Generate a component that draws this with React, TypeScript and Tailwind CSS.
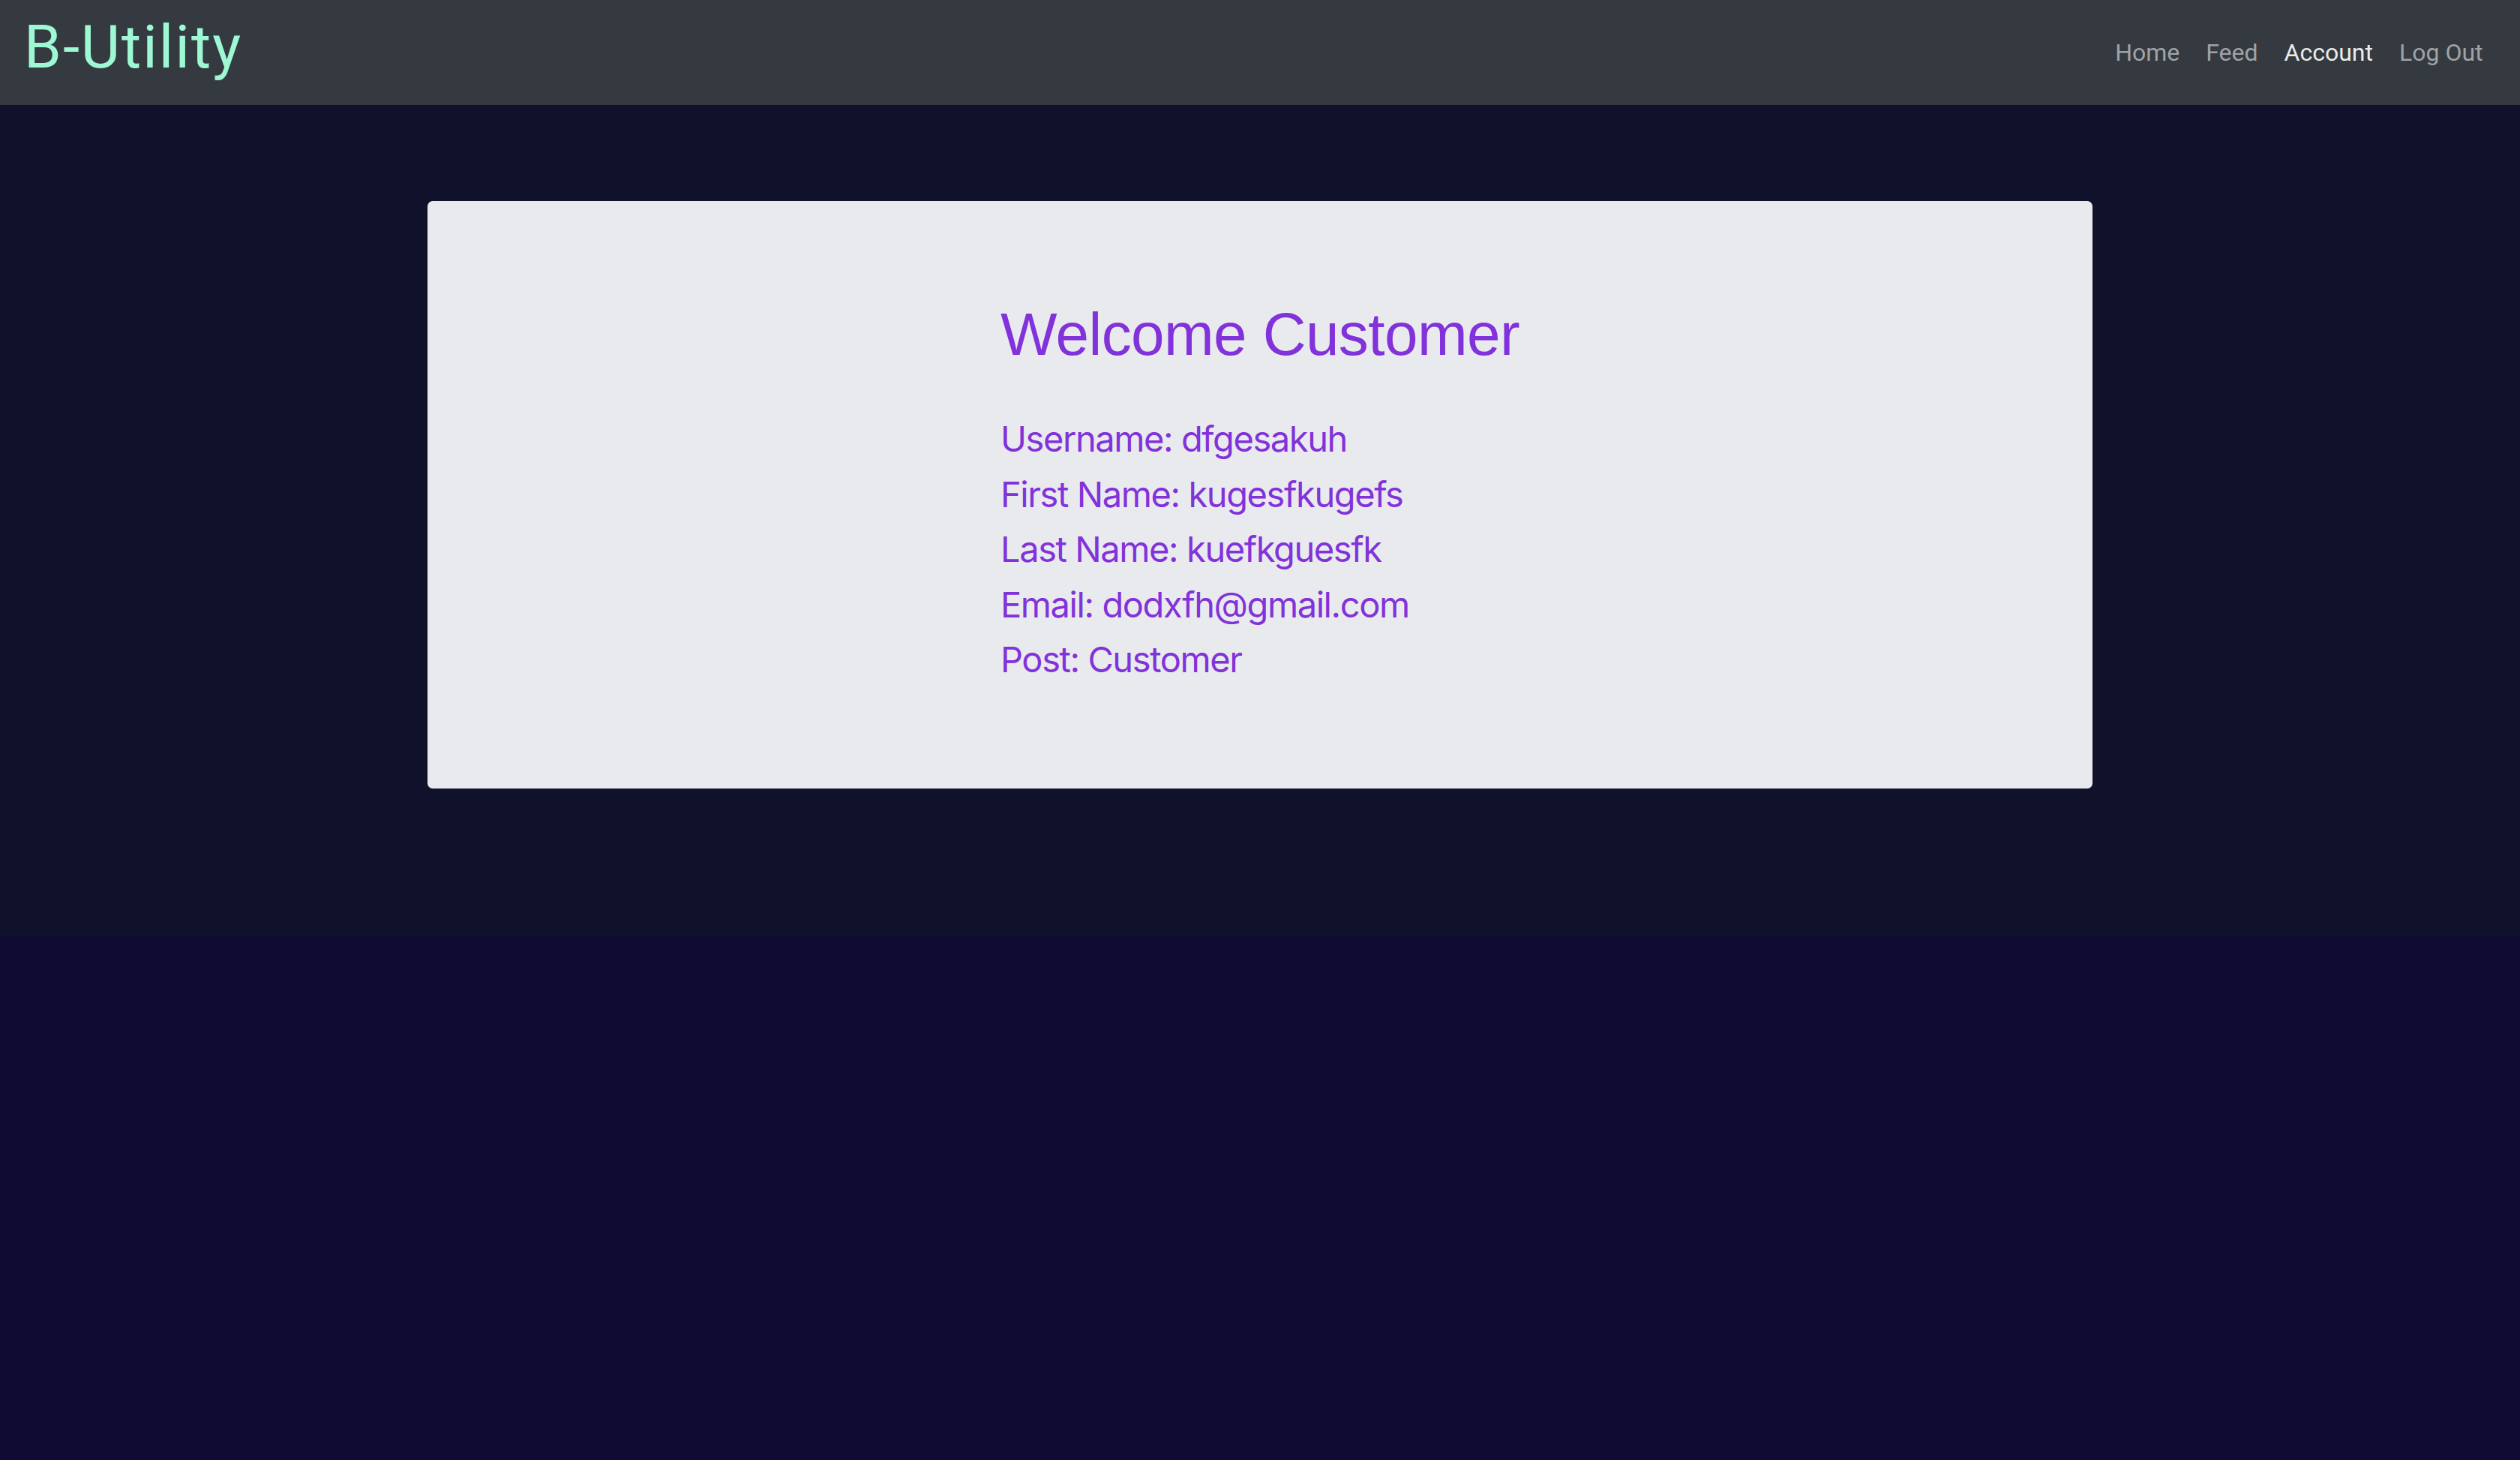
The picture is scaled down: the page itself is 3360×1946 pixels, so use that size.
import React from "react";

const lines = [
  "Username: dfgesakuh",
  "First Name: kugesfkugefs",
  "Last Name: kuefkguesfk",
  "Email: dodxfh@gmail.com",
  "Post: Customer",
];

export default function App() {
  return (
    <div className="min-h-screen bg-[#0f0b33]">
      <nav className="flex h-[140px] justify-between bg-[#343a40] px-8 font-['Roboto',sans-serif]">
        <div className="mt-[23px] self-start text-[80px] leading-none tracking-[0.026em] text-[#9ef8d4]">B-Utility</div>
        <ul className="flex items-center text-[32px]">
          <li className="px-[17.5px] text-[#a0a3a6]">Home</li>
          <li className="px-[17.5px] text-[#a0a3a6]">Feed</li>
          <li className="px-[17.5px] text-[#ebebeb]">Account</li>
          <li className="px-[17.5px] text-[#a0a3a6]">Log Out</li>
        </ul>
      </nav>
      <section className="bg-[#10112b] pt-32 pb-[196px]">
        <div className="mx-auto w-[2220px] rounded-[7px] bg-[#e9eaee] pt-[130px] pb-[143px] text-[#8232da]">
          <div className="mx-auto w-fit">
            <h1 className="mb-[62px] font-['Liberation_Sans',Arial,sans-serif] text-[80px] leading-[96px] tracking-[-0.007em]">
              Welcome Customer
            </h1>
            <div className="flex flex-col gap-4 font-['Inter',sans-serif] text-[47px] leading-[57.6px] tracking-[-0.03em]">
              {lines.map((l) => (
                <div key={l}>{l}</div>
              ))}
            </div>
          </div>
        </div>
      </section>
    </div>
  );
}
